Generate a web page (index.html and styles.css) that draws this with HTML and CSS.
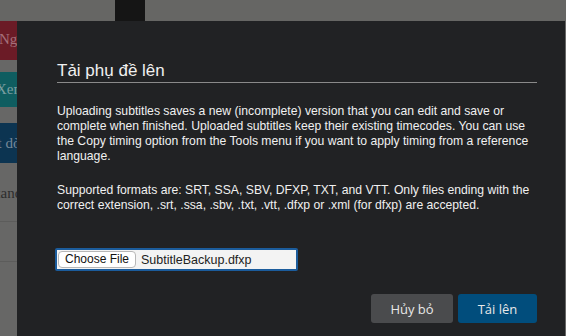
FILE: index.html
```html
<!DOCTYPE html>
<html lang="vi">
<head>
<meta charset="utf-8">
<link rel="stylesheet" href="styles.css">
</head>
<body>
<div class="page">
  <div class="topbar"><div class="topbar-box"></div></div>
  <div class="sidebar">
    <div class="tab tab-red">Ngữ cảnh</div>
    <div class="tab tab-teal">Xem</div>
    <div class="tab tab-blue">Đặt dòng</div>
    <div class="side-text">Standard</div>
    <div class="side-rule"></div>
    <div class="side-rule second"></div>
  </div>
</div>
<div class="modal">
  <h2 class="modal-title">Tải phụ đề lên</h2>
  <p class="modal-text">Uploading subtitles saves a new (incomplete) version that you can edit and save or complete when finished. Uploaded subtitles keep their existing timecodes. You can use the Copy timing option from the Tools menu if you want to apply timing from a reference language.</p>
  <p class="modal-text">Supported formats are: SRT, SSA, SBV, DFXP, TXT, and VTT. Only files ending with the correct extension, .srt, .ssa, .sbv, .txt, .vtt, .dfxp or .xml (for dfxp) are accepted.</p>
  <div class="file-field">
    <span class="file-btn">Choose File</span>
    <span class="file-name">SubtitleBackup.dfxp</span>
  </div>
  <div class="modal-actions">
    <button class="btn btn-cancel">Hủy bỏ</button>
    <button class="btn btn-primary">Tải lên</button>
  </div>
</div>
</body>
</html>
```
FILE: styles.css
```css
html, body {
  margin: 0;
  padding: 0;
  height: 100%;
  overflow: hidden;
}
body {
  background: #676766;
  font-family: "Liberation Sans", Arial, sans-serif;
}
.page {
  height: 336px;
}
.topbar {
  height: 21px;
  background: #666664;
  padding-left: 115px;
}
.topbar-box {
  width: 30px;
  height: 21px;
  background: #151515;
}
.sidebar {
  width: 17px;
  overflow: hidden;
  white-space: nowrap;
  font-family: "Liberation Serif", serif;
  font-size: 15px;
}
.tab {
  height: 39px;
  line-height: 36px;
  color: #9a9a9a;
  text-indent: -1px;
}
.tab-red {
  background: #6b1b26;
  color: #a4707a;
}
.tab-teal {
  margin-top: 12px;
  height: 35px;
  line-height: 35px;
  background: #0f5d60;
  color: #7a9ea0;
  text-indent: -4px;
}
.tab-blue {
  margin-top: 16px;
  height: 40px;
  line-height: 40px;
  background: #0c3451;
  color: #76889a;
  text-indent: -20px;
}
.side-text {
  margin-top: 20px;
  color: #2d2d2d;
  text-indent: -12px;
  line-height: 20px;
}
.side-rule {
  margin-top: 18px;
  height: 1px;
  background: #5c5c5b;
}
.side-rule.second {
  margin-top: 39px;
}
.modal {
  position: absolute;
  left: 17px;
  top: 21px;
  right: 1px;
  bottom: 0;
  background: #212224;
  box-sizing: border-box;
  padding: 40px 28px 0 40px;
  color: #f0f0f0;
  display: flex;
  flex-direction: column;
}
.modal-title {
  margin: 0;
  font-size: 17px;
  font-weight: normal;
  line-height: 20px;
  padding-bottom: 1px;
  border-bottom: 1px solid #8a8a8a;
}
.modal-text {
  margin: 21px 0 0 0;
  font-size: 12.2px;
  line-height: 15px;
}
.modal-text + .modal-text {
  margin-top: 19px;
}
.file-field {
  margin-top: 35px;
  margin-left: -2px;
  width: 237px;
  height: 19px;
  border: 2px solid #1b5c9c;
  border-radius: 2px;
  background: #f3f3f3;
  display: flex;
  align-items: center;
  gap: 5px;
  padding: 0 1px;
}
.file-btn {
  font-size: 12px;
  color: #111;
  background: #fff;
  border: 1px solid #b7b7b7;
  border-radius: 4px;
  height: 15px;
  line-height: 15px;
  padding: 0 6px;
}
.file-name {
  font-size: 12.5px;
  color: #222;
}
.modal-actions {
  margin-top: 23px;
  display: flex;
  justify-content: flex-end;
  gap: 5px;
}
.btn {
  height: 29px;
  border: none;
  border-radius: 3px;
  font-family: "Open Sans", sans-serif;
  font-size: 13px;
  color: #e8e8e8;
  padding: 0;
}
.btn-cancel {
  width: 82px;
  background: #4a4b4d;
}
.btn-primary {
  width: 79px;
  background: #014d7c;
}
```
